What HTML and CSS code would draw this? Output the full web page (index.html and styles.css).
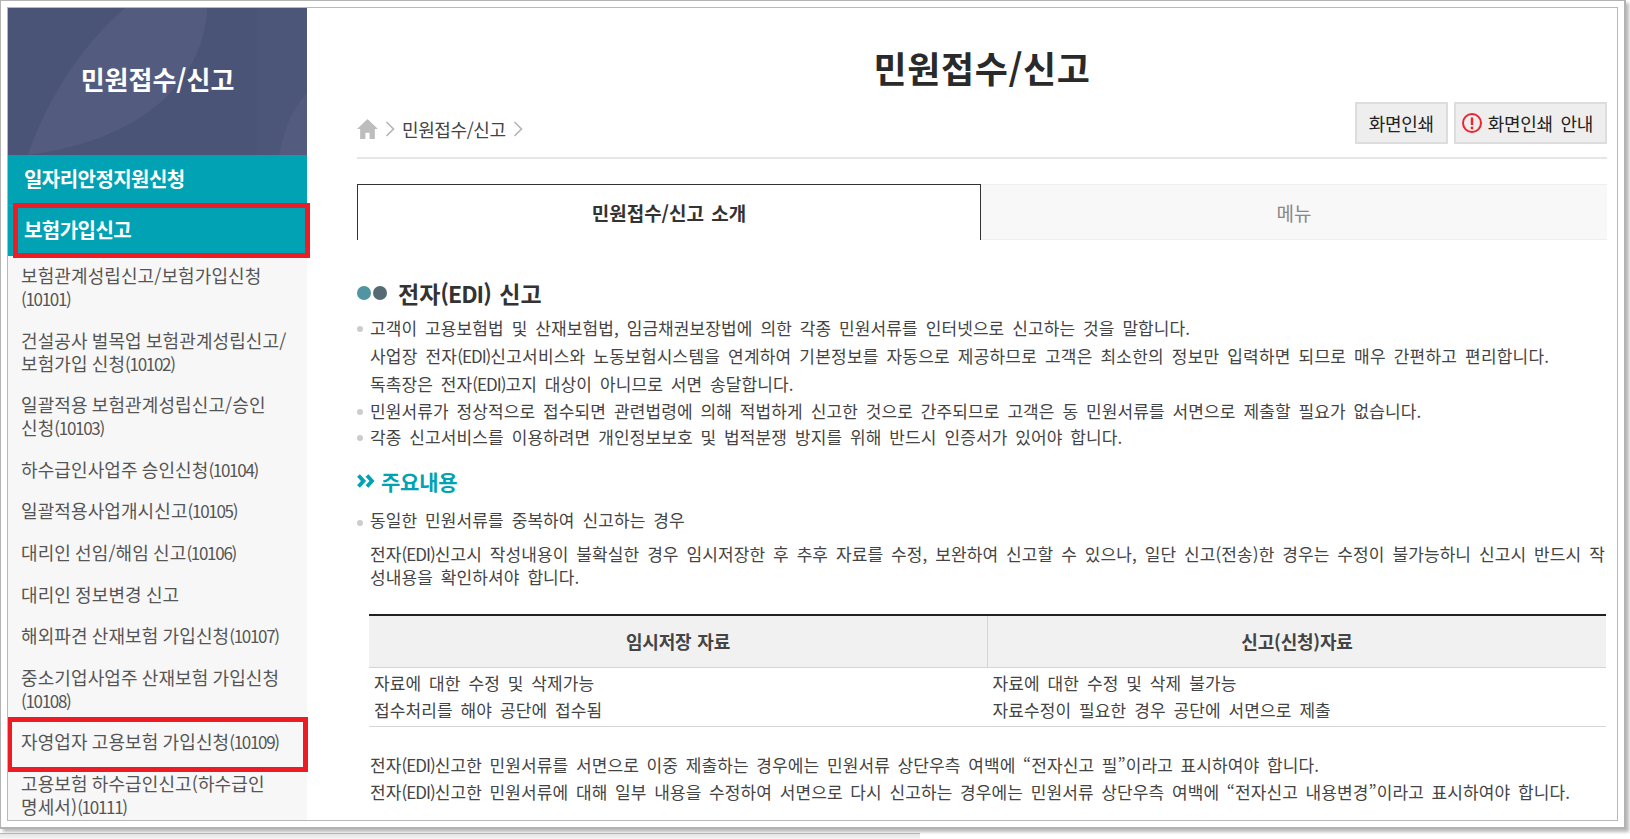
FILE: index.html
```html
<!DOCTYPE html>
<html lang="ko">
<head>
<meta charset="utf-8">
<title>민원접수/신고</title>
<link rel="stylesheet" href="styles.css">
</head>
<body>
<div class="sheet">
  <div class="frame">
    <aside class="side">
      <div class="side-head">
        <svg class="arcs" viewBox="0 0 299 147" preserveAspectRatio="none"><path d="M249 0H299V147H249Z" fill="#4c5678"/><path d="M20 147C35 100 70 40 117 0H199C197 60 150 130 20 147Z" fill="#535c7e"/><path d="M271 147C276 120 285 100 299 85V147Z" fill="#535c7e"/></svg>
        <h2 class="side-title">민원접수/신고</h2>
      </div>
      <div class="side-cat">일자리안정지원신청</div>
      <div class="side-cat second">보험가입신고</div>
      <ul class="side-list">
        <li>보험관계성립신고/보험가입신청<br><span class="num">(10101)</span></li>
        <li>건설공사 벌목업 보험관계성립신고/<br>보험가입 신청<span class="num">(10102)</span></li>
        <li>일괄적용 보험관계성립신고/승인<br>신청<span class="num">(10103)</span></li>
        <li>하수급인사업주 승인신청<span class="num">(10104)</span></li>
        <li>일괄적용사업개시신고<span class="num">(10105)</span></li>
        <li>대리인 선임/해임 신고<span class="num">(10106)</span></li>
        <li>대리인 정보변경 신고</li>
        <li>해외파견 산재보험 가입신청<span class="num">(10107)</span></li>
        <li>중소기업사업주 산재보험 가입신청<br><span class="num">(10108)</span></li>
        <li>자영업자 고용보험 가입신청<span class="num">(10109)</span></li>
        <li>고용보험 하수급인신고(하수급인<br>명세서)<span class="num">(10111)</span></li>
      </ul>
    </aside>
    <main class="main">
      <h1 class="title">민원접수/신고</h1>
      <div class="crumbs">
        <nav class="path">
          <svg class="home" viewBox="0 0 20 20"><path d="M10 1 0 10.500h3V20h5v-6h4v6h5v-9.500h3Z" fill="#bdbdbd"/></svg>
          <svg class="chev" viewBox="0 0 9 16"><path d="M1 1l7 7-7 7" fill="none" stroke="#b5b5b5" stroke-width="1.600"/></svg>
          <span>민원접수/신고</span>
          <svg class="chev" viewBox="0 0 9 16"><path d="M1 1l7 7-7 7" fill="none" stroke="#b5b5b5" stroke-width="1.600"/></svg>
        </nav>
        <div class="btns">
          <span class="btn">화면인쇄</span>
          <span class="btn info"><svg class="warn" viewBox="0 0 22 22"><circle cx="11" cy="11" r="9" fill="none" stroke="#f0222d" stroke-width="2"/><path d="M11 5.500v7.500" stroke="#f0222d" stroke-width="2.400"/><circle cx="11" cy="16" r="1.400" fill="#f0222d"/></svg>화면인쇄 안내</span>
        </div>
      </div>
      <div class="tabs">
        <div class="tab on">민원접수/신고 소개</div>
        <div class="tab">메뉴</div>
      </div>
      <h3 class="sec"><i class="dot a"></i><i class="dot b"></i><span>전자<span class="lat">(EDI)</span> 신고</span></h3>
      <ul class="bul">
        <li>고객이 고용보험법 및 산재보험법, 임금채권보장법에 의한 각종 민원서류를 인터넷으로 신고하는 것을 말합니다.<br><span class="wide">사업장 전자<span class="lat">(EDI)</span>신고서비스와 노동보험시스템을 연계하여 기본정보를 자동으로 제공하므로 고객은 최소한의 정보만 입력하면 되므로 매우 간편하고 편리합니다.</span><br>독촉장은 전자<span class="lat">(EDI)</span>고지 대상이 아니므로 서면 송달합니다.</li>
        <li>민원서류가 정상적으로 접수되면 관련법령에 의해 적법하게 신고한 것으로 간주되므로 고객은 동 민원서류를 서면으로 제출할 필요가 없습니다.</li>
        <li>각종 신고서비스를 이용하려면 개인정보보호 및 법적분쟁 방지를 위해 반드시 인증서가 있어야 합니다.</li>
      </ul>
      <h4 class="sub"><svg class="raq" viewBox="0 0 18 14"><path d="M1.500 1.500l5 5.500-5 5.500M10 1.500l5 5.500-5 5.500" fill="none" stroke="#00a2b4" stroke-width="3.800"/></svg>주요내용</h4>
      <ul class="bul two">
        <li><span class="lead">동일한 민원서류를 중복하여 신고하는 경우</span>전자<span class="lat">(EDI)</span>신고시 작성내용이 불확실한 경우 임시저장한 후 추후 자료를 수정, 보완하여 신고할 수 있으나, 일단 신고(전송)한 경우는 수정이 불가능하니 신고시 반드시 작성내용을 확인하셔야 합니다.</li>
      </ul>
      <table class="tbl">
        <tr><th>임시저장 자료</th><th>신고(신청)자료</th></tr>
        <tr><td>자료에 대한 수정 및 삭제가능<br>접수처리를 해야 공단에 접수됨</td><td>자료에 대한 수정 및 삭제 불가능<br>자료수정이 필요한 경우 공단에 서면으로 제출</td></tr>
      </table>
      <p class="note">전자<span class="lat">(EDI)</span>신고한 민원서류를 서면으로 이중 제출하는 경우에는 민원서류 상단우측 여백에 “전자신고 필”이라고 표시하여야 합니다.<br>전자<span class="lat">(EDI)</span>신고한 민원서류에 대해 일부 내용을 수정하여 서면으로 다시 신고하는 경우에는 민원서류 상단우측 여백에 “전자신고 내용변경”이라고 표시하여야 합니다.</p>
    </main>
    <div class="mark m1"></div>
    <div class="mark m2"></div>
  </div>
</div>
<div class="edge"></div>
</body>
</html>
```
FILE: styles.css
```css
* { box-sizing: border-box; }
html, body { margin: 0; height: 100%; background: #fff; overflow: hidden; }
body { font-family: "Noto Sans CJK KR", "Noto Sans", sans-serif; color: #333; position: relative; }
.sheet { width: 1626px; height: 829px; border: 2px solid #b3b3b3; border-left-width: 1px; border-top-width: 1px; padding: 6px; box-shadow: 3px 3px 3px #bbb; background: #fff; }
.frame { position: relative; display: flex; height: 100%; border: 1px solid #b8b8b8; overflow: hidden; background: #fff; }
.edge { position: absolute; left: 0; top: 833px; width: 920px; height: 6px; border-top: 1px solid #b5b5b5; background: linear-gradient(#e4e4e4, #f6f6f6); }
.side { flex: 0 0 299px; background: #f7f7f7; }
.side-head { position: relative; height: 147px; padding-bottom: 6px; background: #4a5476; display: flex; align-items: center; justify-content: center; }
.arcs { position: absolute; inset: 0; width: 100%; height: 100%; }
.side-title { position: relative; margin: 0; color: #fff; font-size: 26px; font-weight: 700; }
.side-cat { height: 50px; line-height: 48px; padding-left: 16px; background: #00a2b4; color: #fff; font-size: 20px; font-weight: 700; letter-spacing: -0.55px; }
.side-cat.second { height: 51px; border-top: 1px solid #2fa0ac; }
.side-list { list-style: none; margin: 0; padding: 0 0 0 13px; }
.side-list li { padding: 8px 0 10.6px; font-size: 18px; line-height: 23px; letter-spacing: 0.1px; word-spacing: -1px; color: #555; }
.num { font-size: 17px; letter-spacing: -1.3px; }
.lat { letter-spacing: -1px; }
.wide { letter-spacing: 0.2px; }
.main { flex: 1; padding: 0 10px 0 50px; min-width: 0; }
.title { margin: 0; height: 94px; padding-top: 26px; line-height: 66px; text-align: center; font-size: 36px; font-weight: 700; letter-spacing: 0.6px; color: #2a2a2a; }
.crumbs { display: flex; justify-content: space-between; height: 57px; border-bottom: 2px solid #e6e6e6; }
.path { display: flex; align-items: center; gap: 7px; height: 52px; padding-top: 1px; font-size: 18px; letter-spacing: -0.4px; color: #444; }
.home { width: 21px; height: 21px; }
.chev { width: 10px; height: 16px; }
.btns { display: flex; gap: 6px; }
.btn { display: flex; align-items: center; justify-content: center; gap: 5px; height: 42px; padding: 0 12px; background: #eee; border: 2px solid #ddd; font-size: 18px; letter-spacing: -0.3px; word-spacing: 3px; color: #222; }
.btn.info { padding-left: 5px; }
.warn { width: 22px; height: 22px; }
.tabs { display: flex; margin-top: 25px; height: 56px; }
.tab { flex: 1 1 0; display: flex; align-items: center; justify-content: center; background: #f8f8f8; border-top: 1px solid #eee; border-bottom: 1px solid #eee; font-size: 19px; color: #888; }
.tab.on { flex: 0 0 624px; background: #fff; border: 1px solid #333; border-bottom: 0; font-weight: 700; word-spacing: 2px; color: #333; }
.sec { display: flex; align-items: center; margin: 36px 0 0; height: 34px; font-size: 23px; font-weight: 700; word-spacing: 2px; color: #333; }
.dot { width: 14px; height: 14px; border-radius: 50%; margin-right: 2px; }
.dot.a { background: #4f95a2; }
.dot.b { background: #566a74; margin-right: 11px; }
.bul { list-style: none; margin: 4px 0 0; padding: 0; font-size: 17px; letter-spacing: 0.1px; word-spacing: 3px; color: #444; }
.bul li { position: relative; padding-left: 13px; line-height: 28px; margin-bottom: -1.5px; }
.bul li::before { content: ""; position: absolute; left: 0; top: 12px; width: 6px; height: 6px; border-radius: 50%; background: #ccc; }
.sub { display: flex; align-items: center; gap: 6px; margin: 15px 0 0; height: 32px; font-size: 21px; font-weight: 700; letter-spacing: -0.2px; word-spacing: 0; color: #00a2b4; }
.raq { width: 18px; height: 14px; }
.two { margin-top: 11px; }
.two li { line-height: 23px; }
.two .lead { display: block; margin-bottom: 11px; }
.tbl { width: 1237px; margin: 28px 0 0 12px; border-collapse: collapse; border-top: 2px solid #222; font-size: 17px; letter-spacing: 0.1px; word-spacing: 3px; color: #444; table-layout: fixed; }
.tbl th { height: 52px; background: #f1f1f1; font-weight: 700; border-bottom: 1px solid #d5d5d5; font-size: 18px; letter-spacing: -0.2px; word-spacing: 1px; }
.tbl th + th { border-left: 1px solid #d5d5d5; }
.tbl td { padding: 1px 5px 3px; line-height: 27px; border-bottom: 1px solid #d5d5d5; }
.note { margin: 24px 0 0 13px; font-size: 17px; line-height: 27px; letter-spacing: 0.1px; word-spacing: 2.8px; color: #444; }
.mark { position: absolute; border: 5px solid #ed1c24; }
.m1 { left: 5px; top: 195px; width: 297px; height: 55px; }
.m2 { left: -1px; top: 709px; width: 301px; height: 55px; }
```
